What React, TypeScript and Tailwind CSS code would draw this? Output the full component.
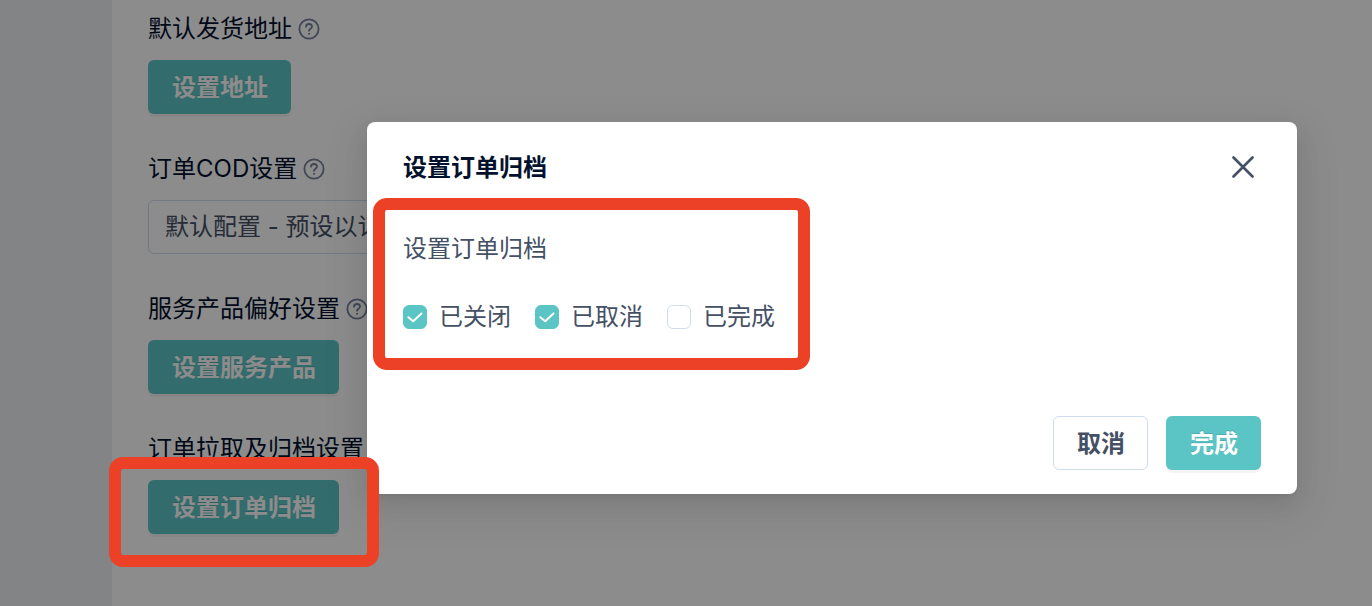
import { useState } from "react";
import type { ReactNode } from "react";

function HelpIcon() {
  return (
    <svg
      className="size-[22px] shrink-0 text-[#77819c]"
      viewBox="0 0 22 22"
      fill="none"
      stroke="currentColor"
      strokeWidth="1.8"
      strokeLinecap="round"
      aria-hidden="true"
    >
      <circle cx="11" cy="11" r="9.6" />
      <path d="M8 8.7c0-1.7 1.3-2.7 3-2.7s3 1 3 2.6c0 2.1-3 2.1-3 4.2" />
      <circle cx="11" cy="15.8" r="0.6" fill="currentColor" strokeWidth="0.9" />
    </svg>
  );
}

function Section({ title, help, children }: { title: string; help?: boolean; children: ReactNode }) {
  return (
    <section className="flex flex-col items-start gap-[13px]">
      <h2 className="flex items-center gap-1.5 text-2xl leading-9 text-[#03112d]">
        {title}
        {help && <HelpIcon />}
      </h2>
      {children}
    </section>
  );
}

function PrimaryButton({ children }: { children: ReactNode }) {
  return (
    <button
      type="button"
      className="h-[54px] rounded-md bg-[#5bc5c5] pt-0.5 pr-[23px] pl-6 text-2xl font-bold text-white shadow-[0_3px_0_rgba(0,0,0,0.045)] text-shadow-[0_-1px_0_rgba(0,0,0,0.12)]"
    >
      {children}
    </button>
  );
}

function StatusCheckbox({ label, initial }: { label: string; initial: boolean }) {
  const [checked, setChecked] = useState(initial);
  return (
    <label className="flex items-center gap-3 text-2xl leading-9 text-[#455065]">
      <span className="grid size-6">
        <input
          type="checkbox"
          checked={checked}
          onChange={(e) => setChecked(e.target.checked)}
          className="col-start-1 row-start-1 size-6 appearance-none rounded-md border border-[#d0dcee] bg-white checked:border-[#5bc5c5] checked:bg-[#5bc5c5]"
        />
        {checked && (
          <svg
            className="pointer-events-none col-start-1 row-start-1 size-6"
            viewBox="0 0 24 24"
            fill="none"
            stroke="white"
            strokeWidth="2"
            strokeLinecap="round"
            strokeLinejoin="round"
            aria-hidden="true"
          >
            <path d="M5.3 12.2 10.2 16.3 18.5 8.5" />
          </svg>
        )}
      </span>
      {label}
    </label>
  );
}

export default function App() {
  return (
    <div className="relative flex min-h-screen bg-[#eef0f5] pl-28 font-['Inter','Noto_Sans_CJK_SC',sans-serif]">
      <main className="flex flex-1 flex-col gap-[37px] bg-white px-9 pt-[11px]">
        <Section title="默认发货地址" help>
          <PrimaryButton>设置地址</PrimaryButton>
        </Section>
        <Section title="订单COD设置" help>
          <select
            aria-label="订单COD设置"
            className="h-[54px] w-[480px] appearance-none rounded-md border border-[#d0dcee] bg-white px-4 text-2xl text-[#455065]"
          >
            <option>默认配置 - 预设以订单</option>
          </select>
        </Section>
        <Section title="服务产品偏好设置" help>
          <PrimaryButton>设置服务产品</PrimaryButton>
        </Section>
        <Section title="订单拉取及归档设置">
          <div className="relative">
            <PrimaryButton>设置订单归档</PrimaryButton>
            <div className="pointer-events-none absolute -top-[23px] -right-10 -bottom-[33px] -left-[39px] z-20 rounded-[14px] border-12 border-[#ec4127]" />
          </div>
        </Section>
      </main>

      <div className="absolute inset-0 z-10 flex items-start justify-end bg-black/45 pt-[122px] pr-[75px]">
        <div
          role="dialog"
          aria-modal="true"
          aria-labelledby="dialog-title"
          className="w-full max-w-[930px] rounded-lg bg-white pb-6 shadow-[0_5px_9px_-6px_rgba(0,0,0,0.12),0_9px_24px_0_rgba(0,0,0,0.08),0_14px_42px_12px_rgba(0,0,0,0.05)]"
        >
          <header className="flex items-center justify-between px-9 pt-7">
            <h1 id="dialog-title" className="text-2xl leading-9 font-bold text-[#03112d]">
              设置订单归档
            </h1>
            <button type="button" aria-label="关闭" className="grid size-9 place-items-center text-[#455065]">
              <svg
                className="size-6"
                viewBox="0 0 24 24"
                fill="none"
                stroke="currentColor"
                strokeWidth="2.6"
                strokeLinecap="round"
                aria-hidden="true"
              >
                <path d="M2.5 1.5 21.5 20.5M21.5 1.5 2.5 20.5" />
              </svg>
            </button>
          </header>
          <div className="relative mx-1.5 mt-3 w-fit pt-[33px] pr-[35px] pb-[35px] pl-[30px]">
            <p className="text-2xl leading-9 text-[#455065]">设置订单归档</p>
            <div className="mt-8 flex gap-6">
              <StatusCheckbox label="已关闭" initial />
              <StatusCheckbox label="已取消" initial />
              <StatusCheckbox label="已完成" initial={false} />
            </div>
            <div className="pointer-events-none absolute inset-0 rounded-[14px] border-12 border-[#ec4127]" />
          </div>
          <footer className="mt-[46px] flex justify-end gap-[18px] px-9">
            <button
              type="button"
              className="h-[54px] rounded-md border border-[#d0dcee] bg-white pt-0.5 pr-[22px] pl-[23px] text-2xl font-bold text-[#455065]"
            >
              取消
            </button>
            <PrimaryButton>完成</PrimaryButton>
          </footer>
        </div>
      </div>
    </div>
  );
}
